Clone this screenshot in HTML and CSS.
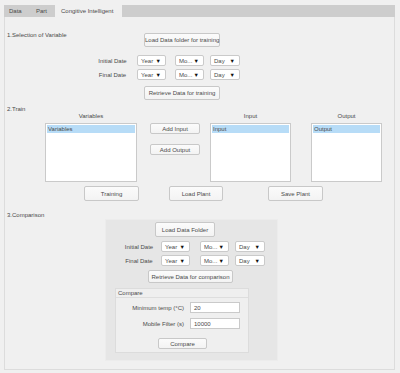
FILE: index.html
```html
<!DOCTYPE html>
<html lang="en">
<head>
<meta charset="UTF-8">
<title>Congitive Intelligent</title>
<link rel="stylesheet" href="styles.css">
</head>
<body>
<div class="tabs">
    <div class="tab">Data</div>
    <div class="tab tab-part">Part</div>
    <div class="tab active">Congitive Intelligent</div>
</div>
<div class="panel">
    <!-- 1. selection -->
    <div class="sel-head">
        <div class="sec-title">1.Selection of Variable</div>
        <button class="btn btn-load">Load Data folder for training</button>
    </div>
    <div class="date-row">
        <div class="date-label">Initial Date</div>
        <div class="dd dd-year">Year<span class="arr">&#9660;</span></div>
        <div class="dd dd-mo">Mo...<span class="arr">&#9660;</span></div>
        <div class="dd dd-day">Day<span class="arr">&#9660;</span></div>
    </div>
    <div class="date-row">
        <div class="date-label">Final Date</div>
        <div class="dd dd-year">Year<span class="arr">&#9660;</span></div>
        <div class="dd dd-mo">Mo...<span class="arr">&#9660;</span></div>
        <div class="dd dd-day">Day<span class="arr">&#9660;</span></div>
    </div>
    <button class="btn btn-retrieve">Retrieve Data for training</button>

    <!-- 2. train -->
    <div class="sec-title sec-train">2.Train</div>
    <div class="train">
        <div class="list-col col-vars">
            <div class="list-label">Variables</div>
            <div class="listbox"><div class="item">Variables</div></div>
        </div>
        <div class="mid-col">
            <button class="btn btn-add">Add Input</button>
            <button class="btn btn-add">Add Output</button>
        </div>
        <div class="list-col col-input">
            <div class="list-label">Input</div>
            <div class="listbox"><div class="item">Input</div></div>
        </div>
        <div class="list-col col-output">
            <div class="list-label">Output</div>
            <div class="listbox"><div class="item">Output</div></div>
        </div>
    </div>
    <div class="train-actions">
        <button class="btn btn-act">Training</button>
        <button class="btn btn-act btn-loadplant">Load Plant</button>
        <button class="btn btn-act btn-saveplant">Save Plant</button>
    </div>

    <!-- 3. comparison -->
    <div class="sec-title sec-comp">3.Comparison</div>
    <div class="comp">
        <button class="btn btn-folder">Load Data Folder</button>
        <div class="date-row comp-row">
            <div class="date-label">Initial Date</div>
            <div class="dd dd-year">Year<span class="arr">&#9660;</span></div>
            <div class="dd dd-mo">Mo...<span class="arr">&#9660;</span></div>
            <div class="dd dd-day">Day<span class="arr">&#9660;</span></div>
        </div>
        <div class="date-row comp-row">
            <div class="date-label">Final Date</div>
            <div class="dd dd-year">Year<span class="arr">&#9660;</span></div>
            <div class="dd dd-mo">Mo...<span class="arr">&#9660;</span></div>
            <div class="dd dd-day">Day<span class="arr">&#9660;</span></div>
        </div>
        <button class="btn btn-retr-comp">Retrieve Data for comparison</button>
        <div class="group">
            <div class="group-title">Compare</div>
            <div class="field">
                <label>Minimum temp (°C)</label>
                <div class="input">20</div>
            </div>
            <div class="field">
                <label>Mobile Filter (s)</label>
                <div class="input">10000</div>
            </div>
            <button class="btn btn-compare">Compare</button>
        </div>
    </div>
</div>
</body>
</html>
```
FILE: styles.css
```css
body {
    margin: 0;
    padding: 5px 5px 0 4px;
    background-color: #f0f0f0;
    font-family: "Liberation Sans", Arial, sans-serif;
    font-size: 6px;
    color: #4a4a4a;
    white-space: nowrap;
}

.tabs {
    display: flex;
    height: 12px;
    background-color: #cdcdcd;
}

.tab {
    width: 27px;
    line-height: 12px;
    padding-left: 5px;
    box-sizing: border-box;
}

.tab-part {
    width: 24px;
}

.tab.active {
    width: 67px;
    padding-left: 6px;
    background-color: #f0f0f0;
}

.panel {
    height: 353px;
    border: 1px solid #dcdcdc;
    border-top: none;
    box-sizing: border-box;
}

button {
    font-family: inherit;
    font-size: 6px;
    color: #4a4a4a;
    white-space: nowrap;
}

.btn {
    display: block;
    padding: 0;
    background: linear-gradient(#fbfbfb, #f3f3f3);
    border: 1px solid #c8c8c8;
    border-radius: 2px;
}

/* section 1 */
.sel-head {
    display: flex;
    align-items: flex-start;
    padding-top: 14px;
}

.sec-title {
    padding-left: 2px;
    line-height: 8px;
}

.sel-head .sec-title {
    width: 137px;
}

.btn-load {
    width: 76px;
    height: 14px;
    margin-top: 2px;
}

.date-row {
    display: flex;
    align-items: center;
    height: 11px;
    margin-top: 8px;
    padding-left: 83px;
}

.date-row + .date-row {
    margin-top: 3px;
}

.date-label {
    width: 49px;
    text-align: center;
}

.dd {
    position: relative;
    height: 11px;
    line-height: 10px;
    padding-left: 3px;
    background-color: #fff;
    border: 1px solid #cacaca;
    border-radius: 2px;
    box-sizing: border-box;
}

.arr {
    position: absolute;
    right: 4px;
    top: 0;
    font-size: 5.5px;
    color: #111;
}

.dd-year {
    width: 29px;
}

.dd-mo {
    width: 29px;
    margin-left: 9px;
}

.dd-day {
    width: 30px;
    margin-left: 6px;
}

.btn-retrieve {
    width: 76px;
    height: 14px;
    margin: 6px 0 0 139px;
}

/* section 2 */
.sec-train {
    margin-top: 5px;
}

.train {
    display: flex;
    align-items: flex-start;
}

.list-col {
    display: flex;
    flex-direction: column;
}

.list-label {
    height: 9px;
    text-align: center;
}

.listbox {
    height: 59px;
    margin-top: 1px;
    padding: 1px;
    background-color: #fff;
    border: 1px solid #cacaca;
    box-sizing: border-box;
}

.item {
    height: 8px;
    line-height: 8px;
    padding-left: 1px;
    background-color: #b7dcf7;
}

.col-vars {
    width: 92px;
    margin-left: 40px;
}

.mid-col {
    display: flex;
    flex-direction: column;
    gap: 10px;
    margin: 10px 0 0 13px;
}

.btn-add {
    width: 50px;
    height: 11px;
}

.col-input {
    width: 81px;
    margin-left: 10px;
}

.col-output {
    width: 71px;
    margin-left: 20px;
}

.train-actions {
    display: flex;
    margin-top: 4px;
    padding-left: 79px;
}

.btn-act {
    width: 55px;
    height: 15px;
}

.btn-loadplant {
    width: 54px;
    margin-left: 30px;
}

.btn-saveplant {
    margin-left: 45px;
}

/* section 3 */
.sec-comp {
    margin-top: 10px;
}

.comp {
    width: 173px;
    height: 142px;
    margin: 0 0 0 100px;
    padding-top: 2px;
    background-color: #e6e6e6;
    border: 1px solid #ececec;
    box-sizing: border-box;
}

.btn-folder {
    width: 60px;
    height: 15px;
    margin-left: 49px;
}

.comp-row {
    padding-left: 11px;
    margin-top: 4px;
}

.comp-row .date-label {
    width: 44px;
}

.comp-row .dd-mo {
    margin-left: 10px;
}

.btn-retr-comp {
    width: 85px;
    height: 13px;
    margin: 4px 0 0 42px;
}

.group {
    width: 134px;
    height: 65px;
    margin: 5px 0 0 9px;
    background-color: #efefef;
    border: 1px solid #dcdcdc;
    box-sizing: border-box;
}

.group-title {
    height: 8px;
    line-height: 8px;
    padding-left: 2px;
    border-bottom: 1px solid #dedede;
}

.field {
    display: flex;
    align-items: center;
    margin-top: 4px;
}

.field + .field {
    margin-top: 5px;
}

.field label {
    width: 68px;
    text-align: right;
}

.input {
    width: 50px;
    height: 11px;
    line-height: 10px;
    margin-left: 6px;
    padding-left: 3px;
    background-color: #fff;
    border: 1px solid #cacaca;
    box-sizing: border-box;
}

.btn-compare {
    width: 49px;
    height: 11px;
    margin: 9px 0 0 42px;
}
```
